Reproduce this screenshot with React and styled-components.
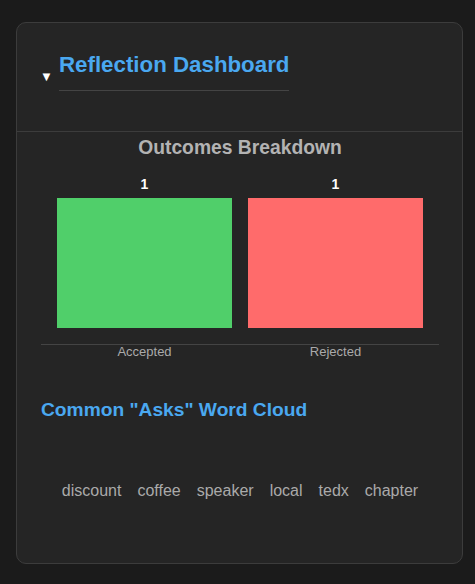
import React from 'react'
import styled, { createGlobalStyle } from 'styled-components'

const GlobalStyle = createGlobalStyle`
    body {
        margin: 0;
        background: #1b1b1b;
        font-family: "Liberation Sans", Arial, sans-serif;
    }
`

const outcomes = [
    { label: 'Accepted', value: 1, color: '#50cf6a' },
    { label: 'Rejected', value: 1, color: '#ff6b6b' },
]

const asks = ['discount', 'coffee', 'speaker', 'local', 'tedx', 'chapter']

function App() {
    const max = Math.max(...outcomes.map(o => o.value))
    return (
        <Page>
            <GlobalStyle />
            <Card open>
                <Summary>
                    <Marker>▼</Marker>
                    <Title>Reflection Dashboard</Title>
                </Summary>
                <Body>
                    <ChartTitle>Outcomes Breakdown</ChartTitle>
                    <Bars>
                        {outcomes.map(o => (
                            <BarCol key={o.label}>
                                <Value>{o.value}</Value>
                                <Bar $color={o.color} style={{ height: `${(o.value / max) * 130}px` }} />
                            </BarCol>
                        ))}
                    </Bars>
                    <Labels>
                        {outcomes.map(o => (
                            <Label key={o.label}>{o.label}</Label>
                        ))}
                    </Labels>
                    <SectionTitle>Common "Asks" Word Cloud</SectionTitle>
                    <Cloud>
                        {asks.map(w => (
                            <Word key={w}>{w}</Word>
                        ))}
                    </Cloud>
                </Body>
            </Card>
        </Page>
    )
}

const Page = styled.div`
    padding: 22px 12px 20px 16px;
`

const Card = styled.details`
    width: 447px;
    box-sizing: border-box;
    height: 542px;
    background: #252525;
    border: 1px solid #3c3c3c;
    border-radius: 10px;
`

const Summary = styled.summary`
    list-style: none;
    display: flex;
    align-items: flex-end;
    padding: 29px 24px 40px 23px;
    border-bottom: 1px solid #3c3c3c;
    cursor: pointer;
    &::-webkit-details-marker {
        display: none;
    }
`

const Marker = styled.span`
    color: #fff;
    font-size: 13px;
    width: 19px;
    margin-bottom: 7px;
`

const Title = styled.h2`
    margin: 0;
    color: #4aa8f0;
    font-size: 22.3px;
    font-weight: bold;
    padding-bottom: 12px;
    border-bottom: 1px solid #444;
`

const Body = styled.div`
    padding: 5px 23px 0 24px;
`

const ChartTitle = styled.h3`
    margin: 0;
    text-align: center;
    color: #b3b3b3;
    font-size: 19.3px;
    font-weight: bold;
`

const Bars = styled.div`
    display: flex;
    align-items: flex-end;
    gap: 16px;
    padding: 18px 16px 16px;
    border-bottom: 1px solid #444;
`

const BarCol = styled.div`
    flex: 1;
    display: flex;
    flex-direction: column;
    align-items: center;
`

const Value = styled.div`
    color: #fff;
    font-size: 14px;
    line-height: 15px;
    font-weight: bold;
    margin-bottom: 6px;
`

const Bar = styled.div`
    width: 100%;
    background: ${p => p.$color};
`

const Labels = styled.div`
    display: flex;
    gap: 16px;
    padding: 0 16px;
`

const Label = styled.div`
    flex: 1;
    text-align: center;
    color: #aaa;
    font-size: 13px;
    line-height: 13px;
`

const SectionTitle = styled.h3`
    margin: 41px 0 0;
    color: #4aa8f0;
    font-size: 19.2px;
    font-weight: bold;
`

const Cloud = styled.div`
    display: flex;
    justify-content: center;
    flex-wrap: wrap;
    gap: 16px;
    padding-top: 61px;
`

const Word = styled.span`
    color: #aaa;
    font-size: 16px;
`

export default App
